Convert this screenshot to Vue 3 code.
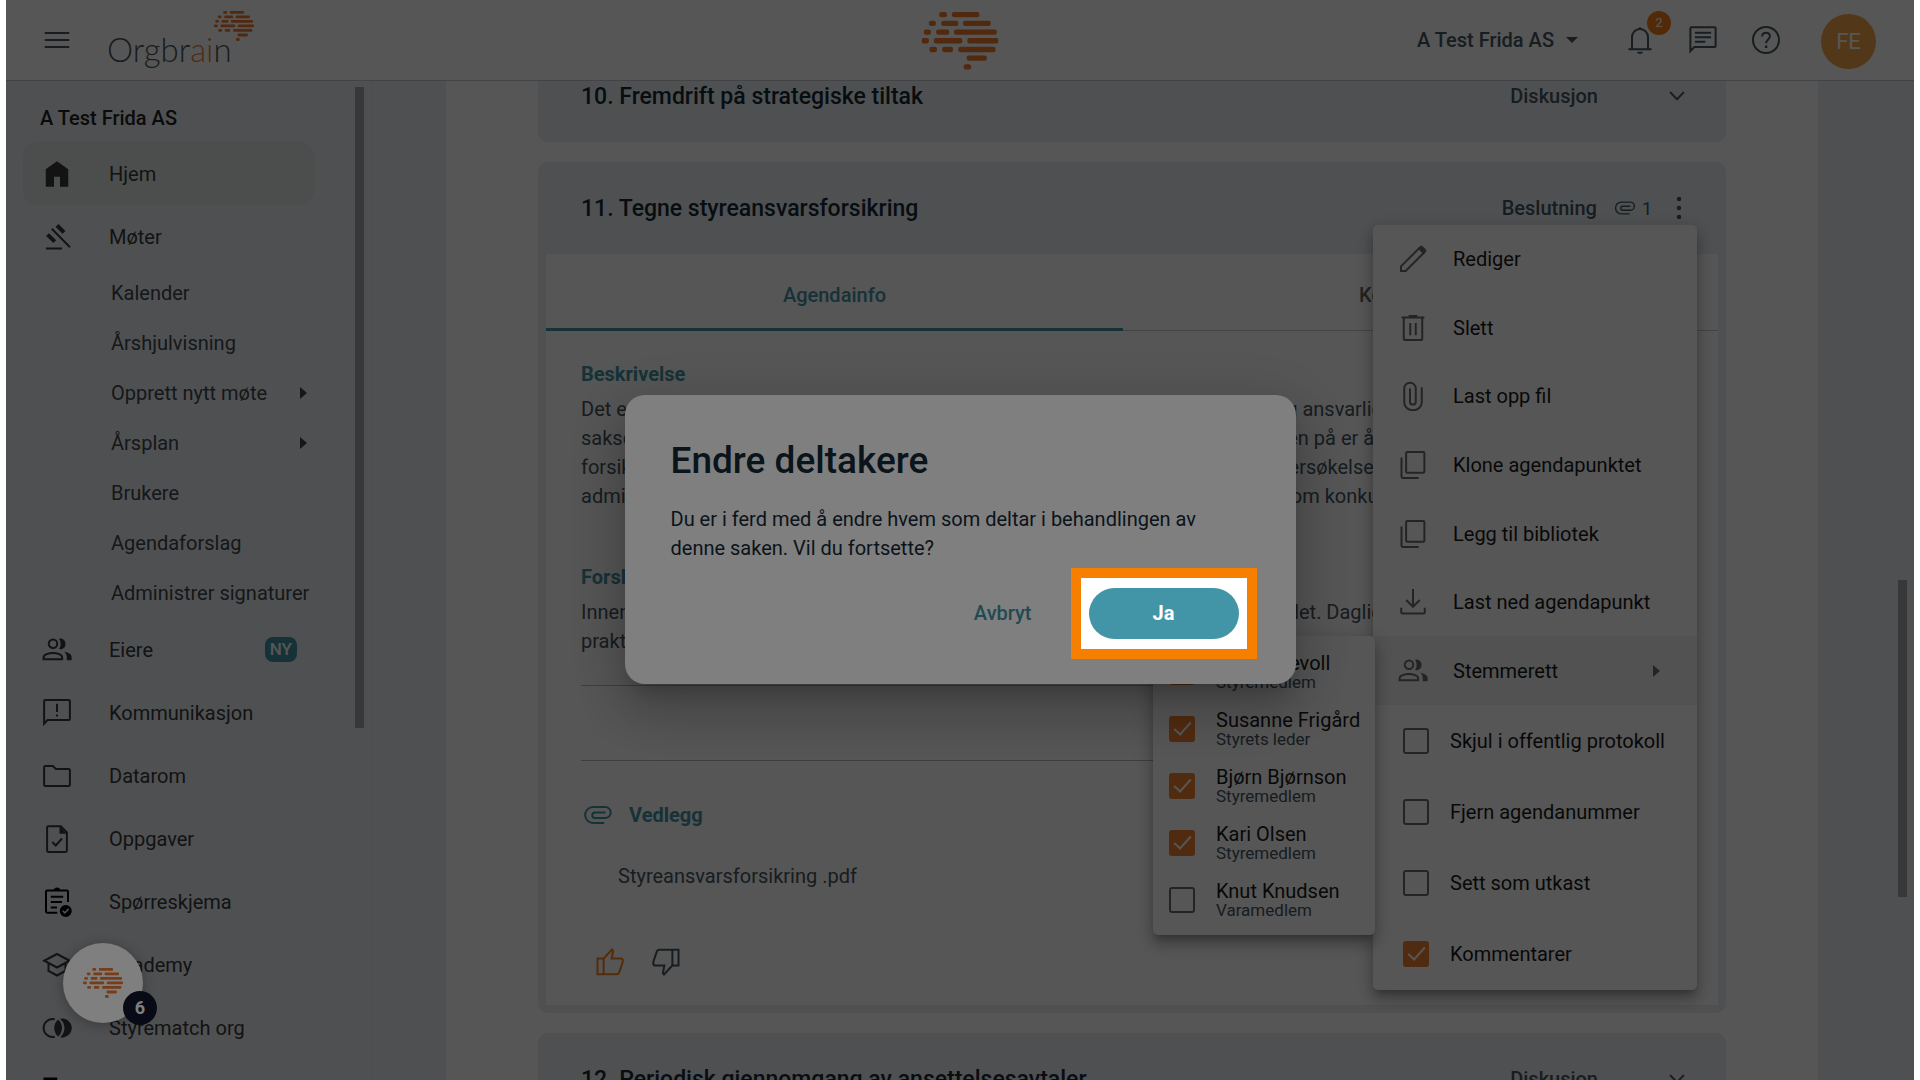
<template>
  <div class="app">
    <header class="topbar">
      <button class="icon-btn menu-btn" aria-label="Meny">
        <Icon name="menu" />
      </button>
      <a class="logo" href="#">
        <span>Orgbr<em>ai</em>n</span>
        <Brain class="logo-brain" />
      </a>
      <Brain class="center-brain" />
      <div class="topbar-right">
        <button class="org-select">A Test Frida AS <i class="caret-down"></i></button>
        <button class="icon-btn" aria-label="Varsler">
          <Icon name="bell" />
          <span class="bell-badge">2</span>
        </button>
        <button class="icon-btn" aria-label="Meldinger"><Icon name="chat" /></button>
        <button class="icon-btn" aria-label="Hjelp"><Icon name="help" /></button>
        <button class="avatar">FE</button>
      </div>
    </header>

    <div class="layout">
      <aside class="sidebar">
        <h2 class="sidebar-title">A Test Frida AS</h2>
        <nav>
          <template v-for="item in nav" :key="item.label">
            <a class="nav-item" :class="{ active: item.active }" href="#">
              <Icon :name="item.icon" :class="{ black: item.black }" />
              <span>{{ item.label }}</span>
              <b v-if="item.badge" class="nav-badge">{{ item.badge }}</b>
            </a>
            <a v-for="sub in item.children" :key="sub.label" class="nav-sub" href="#">
              <span>{{ sub.label }}</span>
              <i v-if="sub.more" class="caret-right"></i>
            </a>
          </template>
        </nav>
        <div class="thumb sidebar-thumb"></div>
      </aside>

      <main class="main">
        <div class="panel">
          <section class="card">
            <div class="card-head">
              <h3>10. Fremdrift på strategiske tiltak</h3>
              <span class="kind">Diskusjon</span>
              <button class="toggle" aria-label="Vis"><Icon name="chevron" /></button>
            </div>
          </section>

          <section class="card open">
            <div class="card-head">
              <h3>11. Tegne styreansvarsforsikring</h3>
              <span class="kind">Beslutning</span>
              <span class="attach-count"><Icon name="clip" /> 1</span>
              <button class="kebab" aria-label="Flere valg"><Icon name="kebab" /></button>
            </div>
            <div class="card-body">
              <div class="tabs">
                <button class="tab selected">Agendainfo</button>
                <button class="tab">Kommentar</button>
              </div>
              <div class="content">
                <h4>Beskrivelse</h4>
                <p>
                  <span v-for="line in description" :key="line">{{ line }}</span>
                </p>
                <h4 class="proposal">Forslag til vedtak</h4>
                <p>
                  <span v-for="line in proposal" :key="line">{{ line }}</span>
                </p>
                <div class="notes"></div>
                <h4 class="attachments"><Icon name="clip" /> Vedlegg</h4>
                <a class="file" href="#">Styreansvarsforsikring .pdf</a>
                <div class="votes">
                  <button class="vote up" aria-label="For"><Icon name="thumbUp" /></button>
                  <button class="vote" aria-label="Mot"><Icon name="thumbDown" /></button>
                </div>
              </div>
            </div>

            <div class="menu">
              <div class="menu-actions">
                <div v-for="action in actions" :key="action.label" class="menu-row" :class="{ current: action.sub }">
                  <button class="menu-item">
                    <Icon :name="action.icon" />
                    <span>{{ action.label }}</span>
                    <i v-if="action.sub" class="caret-right"></i>
                  </button>
                  <div v-if="action.sub" class="submenu">
                    <label v-for="m in members" :key="m.name" class="member">
                      <input v-model="m.checked" type="checkbox" />
                      <span>
                        {{ m.name }}
                        <small>{{ m.role }}</small>
                      </span>
                    </label>
                  </div>
                </div>
              </div>
              <div class="menu-options">
                <label v-for="o in options" :key="o.label" class="option">
                  <input v-model="o.checked" type="checkbox" />
                  <span>{{ o.label }}</span>
                </label>
              </div>
            </div>
          </section>

          <section class="card">
            <div class="card-head">
              <h3>12. Periodisk gjennomgang av ansettelsesavtaler</h3>
              <span class="kind">Diskusjon</span>
              <button class="toggle" aria-label="Vis"><Icon name="chevron" /></button>
            </div>
          </section>
        </div>
        <div class="thumb main-thumb"></div>
      </main>
    </div>

    <div class="backdrop"></div>

    <button class="fab" aria-label="Hjelpesenter">
      <Brain class="fab-brain" />
      <span class="fab-badge">6</span>
    </button>

    <div class="dialog-layer">
      <div class="dialog" role="dialog" aria-labelledby="dialog-title">
        <h1 id="dialog-title">Endre deltakere</h1>
        <p>Du er i ferd med å endre hvem som deltar i behandlingen av denne saken. Vil du fortsette?</p>
        <div class="dialog-actions">
          <button class="btn-text">Avbryt</button>
          <div class="spotlight-wrap">
            <button class="btn-fill">Ja</button>
            <div class="spotlight"></div>
          </div>
        </div>
      </div>
    </div>
  </div>
</template>

<script setup>
import { h, reactive } from 'vue'

// [d, filled] pairs on a 24x24 grid
const icons = {
  menu: [['M2.2 6.4h19.6M2.2 12h19.6M2.2 17.6h19.6']],
  bell: [
    ['M5.6 18.7V9.6a6.4 6.4 0 0 1 12.8 0v9.1M2.8 19.3h18.4M12 3.2V1.8'],
    ['M9.8 21.3h4.4a2.2 1.8 0 0 1-4.4 0z', true]
  ],
  chat: [
    ['M1.9 20.9V2.6q0-.8.8-.8h18.6q.8 0 .8.8v14.2q0 .8-.8.8H5z'],
    ['M5.5 6.2h13M5.5 9.8h13M5.5 13.4h8.4']
  ],
  help: [
    ['M12 1.6a10.4 10.4 0 1 0 0 20.8 10.4 10.4 0 0 0 0-20.8z'],
    ['M8.9 9.2c0-4.2 6.2-4 6.2-.2 0 2.6-3 2.6-3 5.6'],
    ['M11.1 16.4h2v2h-2z', true]
  ],
  home: [['M3 22.2V8.2l9-6.4 9 6.4v14h-6.6v-8H9.6v8z', true]],
  gavel: [
    ['M7.8 5.4l14.6 14.8M3.2 21.1H16'],
    ['M13.2 1.6l5.6 5.6-2.4 2.2-5.6-5.6zM5.6 8.9l5.8 5.6-2.3 2.3-5.8-5.7z', true]
  ],
  people: [
    ['M8.8 3.6a3.4 3.4 0 1 0 0 6.8 3.4 3.4 0 0 0 0-6.8zM1.3 19.4v-1.6c0-2 4-3.4 7.4-3.4s7.4 1.4 7.4 3.4v1.6z'],
    ['M13.6 2.9c3.2-.6 5.2 1.6 5.2 4.2s-2 4.7-5.2 4.1c1.8-2.4 1.8-5.9 0-8.3zM17.8 13.4c3.4.7 5.9 2 5.9 4.2v2.6h-3.9v-2.7c0-1.6-.8-3-2-4.1z', true]
  ],
  feedback: [
    ['M1.7 20.5V2.4q0-.8.8-.8h19q.8 0 .8.8v14.4q0 .8-.8.8H4.4z'],
    ['M12 4.5v6.6M12 13.2v1.6']
  ],
  folder: [['M1.7 19V5q0-1 1-1h6l2.4 2.4h10.2q1 0 1 1V19q0 1-1 1H2.7q-1 0-1-1z']],
  fileCheck: [
    ['M4.1 2.6q0-.9.9-.9h10l4.9 5v14.7q0 .9-.9.9H5q-.9 0-.9-.9z'],
    ['M14 1.5l6 6.2h-6z', true],
    ['M8.2 14.4l2.8 2.8 5-5.6']
  ],
  clipboard: [
    ['M20.8 12V3.6q0-.9-.9-.9H4.1q-.9 0-.9.9v16q0 .9.9.9h8.2M7 7.8h10M7 12h9M7 16.4h5'],
    ['M9 3.2q.4-2.8 3-2.8t3 2.8zM19 14.4a4.8 4.8 0 1 0 0 9.6 4.8 4.8 0 0 0 0-9.6zm-.7 7.1l-2.2-2.1.9-.9 1.3 1.2 2.6-2.7.9.9z', true]
  ],
  school: [['M1.8 8.6L12 3.2l10.2 5.4L12 14zM5.2 10.6v6.2L12 20.4l6.8-3.6v-6.2M22.2 8.6v7']],
  match: [
    ['M10.2 5a7.2 7.2 0 1 0 0 14'],
    ['M12.9 5.2a9 9 0 0 0 0 13.6 9 9 0 0 0 0-13.6zM14.6 4.7a9.6 9.6 0 0 1 0 14.6 7.5 7.5 0 1 0 0-14.6z', true]
  ],
  archive: [['M1.2 1.2h11v4h10.6v17H1.2z', true]],
  chevron: [['M6.4 8.8l5.6 5.8 5.6-5.8']],
  kebab: [['M12 3a1.8 1.8 0 1 0 0 3.6A1.8 1.8 0 0 0 12 3zM12 10.2a1.8 1.8 0 1 0 0 3.6 1.8 1.8 0 0 0 0-3.6zM12 17.4a1.8 1.8 0 1 0 0 3.6 1.8 1.8 0 0 0 0-3.6z', true]],
  clip: [['M17 18.4H8.1a6.4 6.4 0 0 1 0-12.8h9.7a4.4 4.4 0 0 1 0 8.8H9.6a2.2 2.2 0 0 1 0-4.4H18']],
  pencil: [
    ['M2.4 21.6v-3.7L16.8 3.5l3.7 3.7L6.1 21.6z'],
    ['M16 3.4l1.7-1.7q1-1 2 0l2.6 2.6q1 1 0 2l-1.7 1.7z', true]
  ],
  trash: [['M4.6 4.4v16.3q0 .9.9.9h13q.9 0 .9-.9V4.4M2.9 3.6h18.2M8.5 2.4h7M9.8 8v9.8M14.2 8v9.8']],
  clipUp: [['M19 5v12.2a7 6.2 0 0 1-14 0V5.8a4.6 4.4 0 0 1 9.2 0v10.8a2.3 2.3 0 0 1-4.6 0V6']],
  copy: [['M7.4 1.6h12.8q.9 0 .9.9v14.8q0 .9-.9.9H7.4q-.9 0-.9-.9V2.5q0-.9.9-.9zM2.8 6v15.4q0 .9.9.9h12.8']],
  download: [['M12 1.6v14M6.6 10.4l5.4 5.4 5.4-5.4M2.6 16.6v3.6q0 1 1 1h16.8q1 0 1-1v-3.6']],
  thumbUp: [['M6.9 9.2L13.6 2l.9 1-1.2 6.2h7.2q1.7 0 1.7 1.7 0 1-.3 2l-2.6 7.6q-.5 1.3-1.8 1.3H6.9zM2 9.2h4.9v12.6H2z']],
  thumbDown: [['M17.1 14.8L10.4 22l-.9-1 1.2-6.2H3.5q-1.7 0-1.7-1.7 0-1 .3-2l2.6-7.6q.5-1.3 1.8-1.3h10.6zM22 14.8h-4.9V2.2H22z']]
}

const Icon = ({ name }) =>
  h(
    'svg',
    { class: 'icon', viewBox: '0 0 24 24' },
    icons[name].map(([d, filled]) =>
      h('path', {
        d,
        fill: filled ? 'currentColor' : 'none',
        stroke: filled ? 'none' : 'currentColor',
        'stroke-width': 1.6
      })
    )
  )
Icon.props = ['name']

// dashes of the brain mark: x, row, width
const dashes = [
  [53, 0, 23], [91, 0, 82],
  [22, 1, 21], [59, 1, 51], [124, 1, 83],
  [7, 2, 21], [44, 2, 39], [97, 2, 128],
  [0, 3, 22], [37, 3, 85], [137, 3, 93],
  [24, 4, 22], [62, 4, 32], [110, 4, 111],
  [135, 5, 60],
  [126, 6, 22]
]

const Brain = () =>
  h(
    'svg',
    { viewBox: '0 0 230 172' },
    dashes.map(([x, row, width]) =>
      h('rect', { x, y: row * 26, width, height: 16, rx: 6, fill: '#ec7a2f' })
    )
  )

const nav = [
  { label: 'Hjem', icon: 'home', active: true },
  {
    label: 'Møter',
    icon: 'gavel',
    children: [
      { label: 'Kalender' },
      { label: 'Årshjulvisning' },
      { label: 'Opprett nytt møte', more: true },
      { label: 'Årsplan', more: true },
      { label: 'Brukere' },
      { label: 'Agendaforslag' },
      { label: 'Administrer signaturer' }
    ]
  },
  { label: 'Eiere', icon: 'people', badge: 'NY' },
  { label: 'Kommunikasjon', icon: 'feedback' },
  { label: 'Datarom', icon: 'folder' },
  { label: 'Oppgaver', icon: 'fileCheck' },
  { label: 'Spørreskjema', icon: 'clipboard', black: true },
  { label: 'Academy', icon: 'school' },
  { label: 'Styrematch org', icon: 'match' },
  { label: 'Arkiv', icon: 'archive', black: true }
]

const description = [
  'Det er styrets ansvar og at selskapet har en bred dekning for styremedlemmer og ansvarlig',
  'saksomkostninger dersom det blir rettet sak på styret. Meningen med forsikringen på er å',
  'forsikringen dekker også eventuelle kostnader ved gransking eller offentlige undersøkelser',
  'administrasjonen og daglig leder i saker om erstatning av vesentlige hendelser som konkurs'
]

const proposal = [
  'Innen neste styremøte skal administrasjonen hente inn tilbud fra aktører i markedet. Daglig',
  'praktisk ansvar for oppfølging av saken.'
]

const actions = [
  { label: 'Rediger', icon: 'pencil' },
  { label: 'Slett', icon: 'trash' },
  { label: 'Last opp fil', icon: 'clipUp' },
  { label: 'Klone agendapunktet', icon: 'copy' },
  { label: 'Legg til bibliotek', icon: 'copy' },
  { label: 'Last ned agendapunkt', icon: 'download' },
  { label: 'Stemmerett', icon: 'people', sub: true }
]

const members = reactive([
  { name: 'Grete Grevoll', role: 'Styremedlem', checked: true },
  { name: 'Susanne Frigård', role: 'Styrets leder', checked: true },
  { name: 'Bjørn Bjørnson', role: 'Styremedlem', checked: true },
  { name: 'Kari Olsen', role: 'Styremedlem', checked: true },
  { name: 'Knut Knudsen', role: 'Varamedlem', checked: false }
])

const options = reactive([
  { label: 'Skjul i offentlig protokoll', checked: false },
  { label: 'Fjern agendanummer', checked: false },
  { label: 'Sett som utkast', checked: false },
  { label: 'Kommentarer', checked: true }
])
</script>

<style>
body {
  margin: 0;
  background: #fff;
}
</style>

<style scoped>
.app {
  --teal: #4295a6;
  --orange: #f08030;
  --slate: #45565f;
  --navy: #142a36;
  --grey-bg: #ebeef4;
  position: relative;
  display: flex;
  flex-direction: column;
  height: 100vh;
  margin: 0 6px;
  overflow: hidden;
  background: #fff;
  color: #383838;
  font-family: Roboto, "Liberation Sans", sans-serif;
  font-size: 20px;
}

.app *,
.app *::before,
.app *::after {
  box-sizing: border-box;
}

button {
  padding: 0;
  border: 0;
  background: none;
  color: inherit;
  font: inherit;
  cursor: pointer;
}

a {
  color: inherit;
  text-decoration: none;
}

h1,
h2,
h3,
h4,
p {
  margin: 0;
}

.icon {
  display: block;
  flex: none;
  width: 30px;
  height: 30px;
}

.caret-down {
  border: 6px solid transparent;
  border-top-color: currentColor;
  border-bottom: 0;
}

.caret-right {
  border: 6px solid transparent;
  border-left: 7px solid currentColor;
  border-right: 0;
}

/* top bar */
.topbar {
  position: relative;
  display: flex;
  flex: none;
  align-items: center;
  height: 81px;
  padding: 0 38px 0 36px;
  border-bottom: 1px solid #c4c8cc;
  color: var(--slate);
}

.icon-btn {
  position: relative;
  width: 30px;
}

.logo {
  position: relative;
  margin-left: 35px;
  padding-top: 18px;
  font-family: Lato, sans-serif;
  font-size: 33px;
  font-weight: 300;
  line-height: 40px;
}

.logo em {
  color: var(--orange);
  font-style: normal;
}

.logo-brain {
  position: absolute;
  top: 0;
  left: 107px;
  width: 40px;
}

.center-brain {
  position: absolute;
  top: 12px;
  left: 50%;
  width: 77px;
  transform: translateX(-50%);
}

.topbar-right {
  display: flex;
  align-items: center;
  gap: 33px;
  margin-left: auto;
}

.org-select {
  display: flex;
  align-items: center;
  gap: 12px;
  margin-right: 14px;
  font-weight: 500;
}

.bell-badge {
  position: absolute;
  top: -14px;
  left: 22px;
  width: 24px;
  border-radius: 50%;
  background: #f57c1a;
  color: #fff;
  font-size: 13px;
  line-height: 24px;
}

.avatar {
  width: 55px;
  height: 55px;
  margin: 3px 0 0 7px;
  border-radius: 50%;
  background: #f2a448;
  color: #fff;
  font-size: 22px;
}

/* sidebar */
.layout {
  display: flex;
  flex: 1;
  min-height: 0;
}

.sidebar {
  position: relative;
  flex: none;
  width: 367px;
  overflow: hidden;
  border-right: 1px solid #e0e4e8;
  background: var(--grey-bg);
}

.sidebar-title {
  padding: 22px 0 9px 34px;
  color: #222;
  font-size: 20px;
  font-weight: 500;
  line-height: 30px;
}

.nav-item {
  display: flex;
  align-items: center;
  width: 291px;
  height: 63px;
  margin-left: 17px;
  padding: 0 17px 0 19px;
  border-radius: 14px;
}

.nav-item .icon {
  margin-right: 37px;
}

.nav-item .black {
  color: #000;
}

.nav-item.active {
  background: #dfe6e1;
}

.nav-badge {
  margin-left: auto;
  padding: 0 5px;
  border-radius: 8px;
  background: var(--teal);
  color: #fff;
  font-size: 17px;
  font-weight: 500;
  line-height: 25px;
}

.nav-sub {
  display: flex;
  align-items: center;
  justify-content: space-between;
  width: 301px;
  height: 50px;
  padding-left: 105px;
  color: #40474d;
  white-space: nowrap;
}

.thumb {
  position: absolute;
  width: 9px;
  background: #a7a7a7;
}

.sidebar-thumb {
  top: 6px;
  right: 8px;
  height: 641px;
}

.main-thumb {
  top: 499px;
  right: 7px;
  height: 317px;
}

/* agenda */
.main {
  position: relative;
  flex: 1;
  min-width: 0;
  padding: 0 96px 0 73px;
  overflow: hidden;
  background: var(--grey-bg);
}

.panel {
  display: flex;
  flex-direction: column;
  gap: 20px;
  margin-top: -31px;
  padding: 0 92px;
  background: #fff;
}

.card {
  border-radius: 10px;
  background: var(--grey-bg);
}

.card.open {
  position: relative;
  padding: 0 8px 8px;
}

.card-head {
  display: flex;
  align-items: center;
  height: 92px;
  padding: 0 34px 0 43px;
  color: var(--slate);
}

.open .card-head {
  padding: 0 24px 0 35px;
}

.card-head h3 {
  flex: 1;
  color: var(--navy);
  font-size: 23px;
  font-weight: 500;
}

.kind {
  font-weight: 500;
}

.toggle {
  margin-left: 64px;
  color: #5a5a5a;
}

.attach-count {
  display: flex;
  align-items: center;
  gap: 6px;
  margin-left: 17px;
  font-size: 18px;
}

.attach-count .icon {
  width: 22px;
  height: 22px;
}

.kebab {
  margin-left: 12px;
}

.card-body {
  background: #fff;
}

.tabs {
  display: flex;
  height: 77px;
  padding-top: 8px;
  border-bottom: 1px solid #c4c8cc;
}

.tab {
  flex: none;
  width: 577px;
  margin-bottom: -1px;
  border-bottom: 3px solid transparent;
  color: #666;
  font-weight: 500;
}

.tab.selected {
  border-bottom-color: var(--teal);
  color: var(--teal);
}

.content {
  padding: 29px 35px 28px;
  color: var(--slate);
  line-height: 29px;
}

.content h4 {
  color: var(--teal);
  font-size: 20px;
  font-weight: 700;
}

.content p {
  padding-top: 6px;
  overflow: hidden;
}

.content p span {
  display: block;
  white-space: nowrap;
}

.content .proposal {
  padding-top: 52px;
}

.notes {
  height: 76px;
  margin-top: 29px;
  border: 1px solid #b4bcbf;
  border-width: 1px 0;
}

.content .attachments {
  display: flex;
  align-items: center;
  gap: 16px;
  padding: 39px 0 0 2px;
}

.file {
  display: block;
  padding: 32px 0 0 37px;
}

.votes {
  display: flex;
  gap: 26px;
  padding: 56px 0 0 14px;
}

.vote.up {
  color: #f5821f;
}

/* action menu */
.menu,
.submenu {
  position: absolute;
  border-radius: 5px;
  background: #fff;
  color: #1a1a1a;
  box-shadow:
    0 6px 6px -4px rgba(0, 0, 0, 0.25),
    0 10px 13px 1px rgba(0, 0, 0, 0.17),
    0 4px 18px 3px rgba(0, 0, 0, 0.15);
}

.menu {
  top: 63px;
  right: 29px;
  width: 324px;
}

.menu-actions {
  display: grid;
  grid-auto-rows: 1fr;
  height: 480px;
}

.menu-row {
  position: relative;
}

.menu-row.current {
  background: #f3f3f3;
}

.menu-item {
  display: flex;
  align-items: center;
  gap: 25px;
  width: 100%;
  height: 100%;
  padding: 0 37px 0 25px;
}

.menu-item .icon,
.menu-item .caret-right {
  color: #6c6c6c;
}

.menu-item .caret-right {
  margin-left: auto;
}

.menu-options {
  display: grid;
  grid-auto-rows: 1fr;
  height: 285px;
}

.option,
.member {
  display: flex;
  align-items: center;
  gap: 21px;
  white-space: nowrap;
}

.option {
  padding-left: 30px;
}

.submenu {
  top: 0;
  right: calc(100% - 2px);
  width: 222px;
  padding: 7px 0;
}

.member {
  height: 57px;
  padding-left: 16px;
  line-height: 20px;
}

.member small {
  display: block;
  color: var(--slate);
  font-size: 17px;
  line-height: 18px;
}

input[type='checkbox'] {
  position: relative;
  flex: none;
  width: 26px;
  height: 26px;
  margin: 0;
  border: 2px solid #6c6c6c;
  border-radius: 3px;
  appearance: none;
}

input[type='checkbox']:checked {
  border-color: var(--orange);
  background: var(--orange);
}

input[type='checkbox']:checked::after {
  position: absolute;
  top: 0;
  left: 7px;
  width: 9px;
  height: 17px;
  border: solid #fff;
  border-width: 0 2px 2px 0;
  content: '';
  transform: rotate(42deg);
}

/* overlays */
.backdrop {
  position: absolute;
  inset: 0;
  background: rgba(0, 0, 0, 0.32);
}

.fab {
  position: absolute;
  bottom: 57px;
  left: 57px;
  width: 80px;
  height: 80px;
  border-radius: 50%;
  background: #fff;
  box-shadow: 0 2px 14px rgba(0, 0, 0, 0.3);
}

.fab-brain {
  width: 40px;
  vertical-align: middle;
}

.fab-badge {
  position: absolute;
  right: -14px;
  bottom: -2px;
  width: 34px;
  border-radius: 50%;
  background: #10162c;
  color: #fff;
  font-size: 18px;
  font-weight: 700;
  line-height: 34px;
}

.dialog-layer {
  position: absolute;
  inset: 0;
  display: flex;
  align-items: center;
  justify-content: center;
  padding-bottom: 2px;
}

.dialog {
  width: 671px;
  padding: 44px 46px 45px;
  border-radius: 20px;
  background: #fff;
  color: var(--navy);
  box-shadow:
    0 14px 19px -9px rgba(0, 0, 0, 0.2),
    0 30px 48px 4px rgba(0, 0, 0, 0.14),
    0 11px 58px 10px rgba(0, 0, 0, 0.12);
}

.dialog h1 {
  font-size: 37px;
  font-weight: 500;
  line-height: 44px;
}

.dialog p {
  padding-top: 22px;
  line-height: 29px;
}

.dialog-actions {
  display: flex;
  align-items: center;
  justify-content: flex-end;
  padding: 25px 11px 0 0;
}

.btn-text {
  margin-right: 57px;
  color: var(--teal);
  font-weight: 500;
}

.spotlight-wrap {
  position: relative;
}

.btn-fill {
  display: block;
  width: 150px;
  height: 51px;
  border-radius: 26px;
  background: var(--teal);
  color: #fff;
  font-weight: 700;
}

/* dims the whole page except the framed button */
.spotlight {
  position: absolute;
  inset: -20px -18px;
  border: 10px solid #f77f00;
  box-shadow: 0 0 0 2000px rgba(0, 0, 0, 0.5);
  pointer-events: none;
}
</style>
